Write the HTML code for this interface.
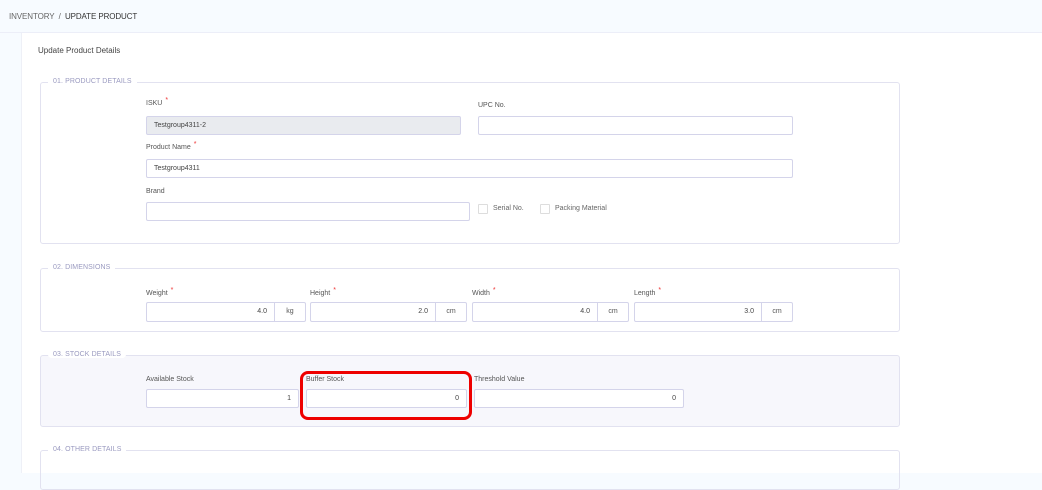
<!DOCTYPE html>
<html><head><meta charset="utf-8"><style>
*{box-sizing:border-box;margin:0;padding:0}
body{width:1042px;height:467px;overflow:hidden;background:#f7fbff;font-family:"Liberation Sans",sans-serif;color:#333;position:relative}
.a{position:absolute}
.bc{left:9px;top:12px;font-size:8px;color:#666;letter-spacing:-0.1px}
.bc b{color:#333;font-weight:normal}
.topline{left:0;top:32px;width:1042px;height:1px;background:#eceef8}
.card{left:21px;top:33px;width:1030px;height:440px;background:#fff;border-left:1px solid #eef0f7}
.title{left:38px;top:46px;font-size:8px;color:#444}
.fs{border:1px solid #e2e2f0;border-radius:3px}
.lg{font-size:7px;color:#9a9ac0;background:#fff;padding:0 5px;letter-spacing:.1px}
.lb{font-size:7px;color:#555}
.lb i{color:#e33;font-style:normal;font-size:7px;position:relative;top:-3px;margin-left:3px}
.in{border:1px solid #d4d4ea;border-radius:2px;background:#fff;font-size:7px;color:#444;padding:0 7px;line-height:17px}
.r{text-align:right}
.u{border-left:1px solid #d4d4ea;font-size:7px;color:#555;text-align:center;line-height:17px;top:0;bottom:0;right:0;width:31px}
.cb{width:10px;height:10px;border:1px solid #ddd;border-radius:1px;background:#fff}
</style></head><body>
<div class="a bc">INVENTORY &nbsp;/&nbsp; <b>UPDATE PRODUCT</b></div>
<div class="a topline"></div>
<div class="a card"></div>
<div class="a title">Update Product Details</div>

<div class="a fs" style="left:40px;top:82px;width:860px;height:162px"></div>
<div class="a lg" style="left:48px;top:78px">01. PRODUCT DETAILS</div>
<div class="a lb" style="left:146px;top:100px">ISKU<i>*</i></div>
<div class="a in" style="left:146px;top:116px;width:315px;height:19px;background:#e9ebef">Testgroup4311-2</div>
<div class="a lb" style="left:478px;top:102px">UPC No.</div>
<div class="a in" style="left:478px;top:116px;width:315px;height:19px"></div>
<div class="a lb" style="left:146px;top:144px">Product Name<i>*</i></div>
<div class="a in" style="left:146px;top:159px;width:647px;height:19px">Testgroup4311</div>
<div class="a lb" style="left:146px;top:188px">Brand</div>
<div class="a in" style="left:146px;top:202px;width:324px;height:19px"></div>
<div class="a cb" style="left:478px;top:204px"></div>
<div class="a lb" style="left:493px;top:205px;color:#666">Serial No.</div>
<div class="a cb" style="left:540px;top:204px"></div>
<div class="a lb" style="left:555px;top:205px;color:#666">Packing Material</div>

<div class="a fs" style="left:40px;top:268px;width:860px;height:64px"></div>
<div class="a lg" style="left:48px;top:264px">02. DIMENSIONS</div>
<div class="a lb" style="left:146px;top:290px">Weight<i>*</i></div>
<div class="a in r" style="left:146px;top:302px;width:160px;height:20px;padding-right:38px">4.0<div class="a u">kg</div></div>
<div class="a lb" style="left:310px;top:290px">Height<i>*</i></div>
<div class="a in r" style="left:310px;top:302px;width:157px;height:20px;padding-right:38px">2.0<div class="a u">cm</div></div>
<div class="a lb" style="left:472px;top:290px">Width<i>*</i></div>
<div class="a in r" style="left:472px;top:302px;width:157px;height:20px;padding-right:38px">4.0<div class="a u">cm</div></div>
<div class="a lb" style="left:634px;top:290px">Length<i>*</i></div>
<div class="a in r" style="left:634px;top:302px;width:159px;height:20px;padding-right:38px">3.0<div class="a u">cm</div></div>

<div class="a fs" style="left:40px;top:355px;width:860px;height:72px;background:#f7f7fc"></div>
<div class="a lg" style="left:48px;top:351px;border-radius:4px">03. STOCK DETAILS</div>
<div class="a lb" style="left:146px;top:376px">Available Stock</div>
<div class="a in r" style="left:146px;top:389px;width:153px;height:19px">1</div>
<div class="a lb" style="left:306px;top:376px">Buffer Stock</div>
<div class="a in r" style="left:306px;top:389px;width:161px;height:19px">0</div>
<div class="a lb" style="left:474px;top:376px">Threshold Value</div>
<div class="a in r" style="left:474px;top:389px;width:210px;height:19px">0</div>
<div class="a" style="left:300px;top:371px;width:172px;height:49px;border:3px solid #e00;border-radius:8px"></div>

<div class="a fs" style="left:40px;top:450px;width:860px;height:40px"></div>
<div class="a lg" style="left:48px;top:446px">04. OTHER DETAILS</div>
</body></html>
